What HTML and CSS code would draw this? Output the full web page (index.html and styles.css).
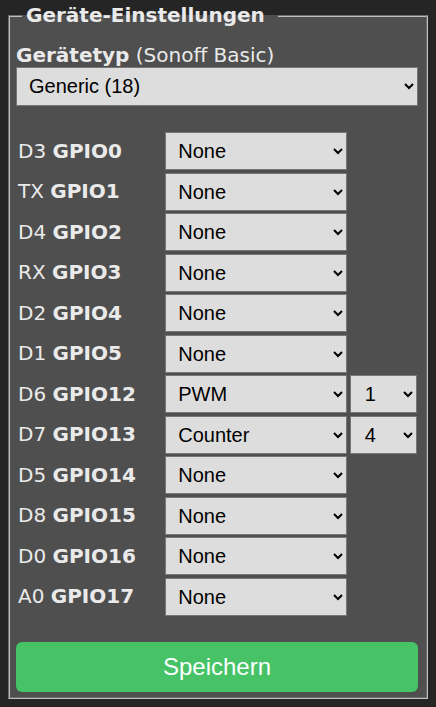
FILE: index.html
```html
<!DOCTYPE html>
<html lang="de">
<head>
<meta charset="utf-8">
<title>Geräte-Einstellungen</title>
<link rel="stylesheet" href="styles.css">
</head>
<body>
<div class="wrap">
<fieldset class="box">
<legend class="title">Geräte-Einstellungen</legend>
<div class="typ"><b>Gerätetyp</b> (Sonoff Basic)</div>
<select class="sel full"><option>Generic (18)</option><option>Sonoff Basic (1)</option></select>
<table class="gpio">
<tr><td class="lab">D3 <b>GPIO0</b></td><td><select class="sel main"><option>None</option></select></td><td></td></tr>
<tr><td class="lab">TX <b>GPIO1</b></td><td><select class="sel main"><option>None</option></select></td><td></td></tr>
<tr><td class="lab">D4 <b>GPIO2</b></td><td><select class="sel main"><option>None</option></select></td><td></td></tr>
<tr><td class="lab">RX <b>GPIO3</b></td><td><select class="sel main"><option>None</option></select></td><td></td></tr>
<tr><td class="lab">D2 <b>GPIO4</b></td><td><select class="sel main"><option>None</option></select></td><td></td></tr>
<tr><td class="lab">D1 <b>GPIO5</b></td><td><select class="sel main"><option>None</option></select></td><td></td></tr>
<tr><td class="lab">D6 <b>GPIO12</b></td><td><select class="sel main"><option>PWM</option><option>None</option></select></td><td><select class="sel idx"><option>1</option><option>2</option></select></td></tr>
<tr><td class="lab">D7 <b>GPIO13</b></td><td><select class="sel main"><option>Counter</option><option>None</option></select></td><td><select class="sel idx"><option>4</option><option>1</option></select></td></tr>
<tr><td class="lab">D5 <b>GPIO14</b></td><td><select class="sel main"><option>None</option></select></td><td></td></tr>
<tr><td class="lab">D8 <b>GPIO15</b></td><td><select class="sel main"><option>None</option></select></td><td></td></tr>
<tr><td class="lab">D0 <b>GPIO16</b></td><td><select class="sel main"><option>None</option></select></td><td></td></tr>
<tr><td class="lab">A0 <b>GPIO17</b></td><td><select class="sel main"><option>None</option></select></td><td></td></tr>
</table>
<button class="save" type="button">Speichern</button>
</fieldset>
</div>
</body>
</html>
```
FILE: styles.css
```css
html, body {
  margin: 0;
  background: #252525;
}
body {
  font-family: "DejaVu Sans", Verdana, sans-serif;
  font-size: 20px;
  line-height: 23px;
  color: #eaeaea;
}
.wrap {
  padding: 4px 8px 8px 8px;
}
.box {
  margin: 0;
  background: #4f4f4f;
  border: 2px groove #c0c0c0;
  padding: 6px 8px 5px 6px;
  min-width: 0;
}
.title {
  font-weight: bold;
  margin-left: 6px;
  padding: 0 13px 0 4px;
  line-height: 23px;
}
.typ {
  margin-top: 11px;
  line-height: 23px;
}
.sel {
  font-family: "Liberation Sans", Arial, sans-serif;
  font-size: 20px;
  line-height: 23px;
  height: 38px;
  padding: 0 4px 0 8px;
  background: #dddddd;
  color: #000000;
  border: 1px solid #767676;
  border-radius: 0;
  box-sizing: border-box;
  margin: 0;
}
.full {
  display: block;
  width: 100%;
  height: 38.5px;
}
.gpio {
  margin-top: 25.5px;
  border-collapse: collapse;
  border-spacing: 0;
}
.gpio td {
  padding: 1.25px;
}
.lab {
  width: 149px;
  padding-left: 2px !important;
  box-sizing: border-box;
}
.main {
  display: block;
  width: 182px;
}
.idx {
  display: block;
  width: 67px;
  padding-left: 10px;
}
.save {
  display: block;
  width: 100%;
  margin-top: 25px;
  height: 50px;
  border: 0;
  border-radius: 6px;
  background: #47c266;
  color: #faffff;
  font-family: "Liberation Sans", Arial, sans-serif;
  font-size: 24px;
}
```
